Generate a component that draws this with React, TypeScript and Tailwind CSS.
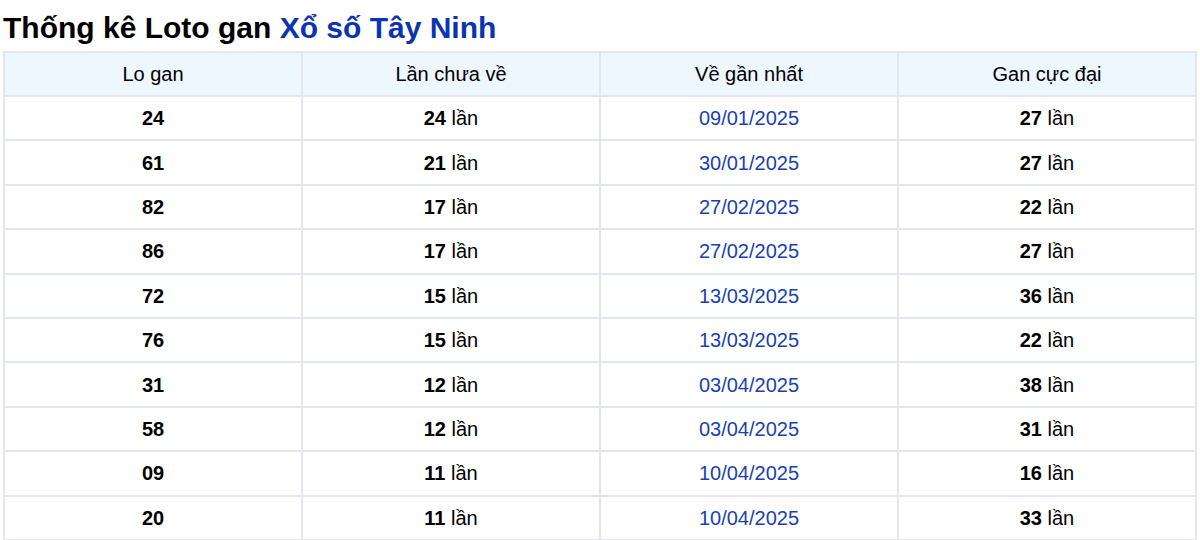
const rows = [
  ["24","24","09/01/2025","27"],["61","21","30/01/2025","27"],["82","17","27/02/2025","22"],["86","17","27/02/2025","27"],["72","15","13/03/2025","36"],["76","15","13/03/2025","22"],["31","12","03/04/2025","38"],["58","12","03/04/2025","31"],["09","11","10/04/2025","16"],["20","11","10/04/2025","33"],
];
export default function App() {
  return (
    <div className="w-[1200px] h-[540px] bg-white px-[3px] text-black" style={{ fontFamily: "'Liberation Sans', Arial, sans-serif" }}>
      <h1 className="text-[30px] font-bold leading-[40px] pt-[8px] h-[51px] whitespace-nowrap">Thống kê Loto gan <span className="text-[#0c33b0]">Xổ số Tây Ninh</span></h1>
      <table className="w-[1194px] border-collapse table-fixed text-[20px]">
        <thead>
          <tr className="bg-[#eef6fe] h-[44px]">
            {["Lo gan","Lần chưa về","Về gần nhất","Gan cực đại"].map(h => <th key={h} className="border-2 border-[#e3e6ee] font-normal text-center">{h}</th>)}
          </tr>
        </thead>
        <tbody>
          {rows.map(r => (
            <tr key={r[0]} className="h-[44.4px]">
              <td className="border-2 border-[#e3e6ee] text-center font-bold">{r[0]}</td>
              <td className="border-2 border-[#e3e6ee] text-center"><b>{r[1]}</b> lần</td>
              <td className="border-2 border-[#e3e6ee] text-center text-[#1a3fb0]">{r[2]}</td>
              <td className="border-2 border-[#e3e6ee] text-center"><b>{r[3]}</b> lần</td>
            </tr>
          ))}
        </tbody>
      </table>
    </div>
  );
}
